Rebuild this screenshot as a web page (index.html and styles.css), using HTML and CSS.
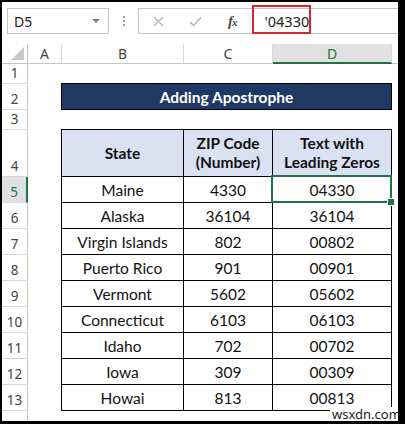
FILE: index.html
```html
<!DOCTYPE html>
<html>
<head>
<meta charset="utf-8">
<link rel="stylesheet" href="styles.css">
</head>
<body>
<div class="frame">
  <div class="fbar">
    <div class="namebox"><span class="nb-text">D5</span><span class="nb-arrow"></span></div>
    <div class="dots"><i></i><i></i><i></i></div>
    <div class="fbox">
      <svg class="ico-x" width="11" height="11" viewBox="0 0 11 11"><path d="M1 1 L10 10 M10 1 L1 10" stroke="#b4b4b4" stroke-width="1.3" fill="none"/></svg>
      <svg class="ico-ok" width="13" height="11" viewBox="0 0 13 11"><path d="M1 6 L4.5 9.5 L12 1.5" stroke="#b4b4b4" stroke-width="1.4" fill="none"/></svg>
      <span class="fx">f<span class="fx-x">x</span></span>
      <span class="ftext">'04330</span>
    </div>
    <div class="redbox"></div>
  </div>
  <div class="colheads">
    <div class="corner"><span class="tri"></span></div>
    <div class="ch cw-a">A</div>
    <div class="ch cw-b">B</div>
    <div class="ch cw-c">C</div>
    <div class="ch cw-d sel">D</div>
    <div class="ch rest"></div>
  </div>
  <div class="body">
    <div class="rowheads">
      <div class="rh h20">1</div>
      <div class="rh h26">2</div>
      <div class="rh h20">3</div>
      <div class="rh h47">4</div>
      <div class="rh h26 sel">5</div>
      <div class="rh h26">6</div>
      <div class="rh h26">7</div>
      <div class="rh h26">8</div>
      <div class="rh h26">9</div>
      <div class="rh h26">10</div>
      <div class="rh h26">11</div>
      <div class="rh h26">12</div>
      <div class="rh h26">13</div>
      <div class="rh h26">14</div>
    </div>
    <div class="content">
      <div class="title">Adding Apostrophe</div>
      <div class="tbl">
        <div class="th">State</div>
        <div class="th">ZIP Code<br>(Number)</div>
        <div class="th">Text with<br>Leading Zeros</div>

        <div class="td">Maine</div><div class="td">4330</div><div class="td active">04330</div>
        <div class="td">Alaska</div><div class="td">36104</div><div class="td">36104</div>
        <div class="td">Virgin Islands</div><div class="td">802</div><div class="td">00802</div>
        <div class="td">Puerto Rico</div><div class="td">901</div><div class="td">00901</div>
        <div class="td">Vermont</div><div class="td">5602</div><div class="td">05602</div>
        <div class="td">Connecticut</div><div class="td">6103</div><div class="td">06103</div>
        <div class="td">Idaho</div><div class="td">702</div><div class="td">00702</div>
        <div class="td">Iowa</div><div class="td">309</div><div class="td">00309</div>
        <div class="td">Howai</div><div class="td">813</div><div class="td">00813</div>
      </div>
    </div>
  </div>
  <div class="watermark">wsxdn.com</div>
</div>
</body>
</html>
```
FILE: styles.css
```css
html, body {
  margin: 0;
  padding: 0;
  background: #fff;
}
.frame {
  position: relative;
  width: 405px;
  height: 424px;
  box-sizing: border-box;
  border-style: solid;
  border-color: #000;
  border-width: 2px 7px 3px 2px;
  background: #fff;
  overflow: hidden;
  font-family: "Noto Sans", "Open Sans", sans-serif;
}
.fbar {
  position: relative;
  height: 42px;
  display: flex;
  align-items: flex-start;
  padding-top: 6px;
  box-sizing: border-box;
}
.namebox {
  margin-left: 5px;
  width: 102px;
  height: 26px;
  box-sizing: border-box;
  border: 1px solid #c6c6c6;
  display: flex;
  align-items: center;
  justify-content: space-between;
  padding: 0 8px 0 6px;
  font-size: 14px;
  color: #222;
}
.nb-arrow {
  width: 0;
  height: 0;
  border-left: 4px solid transparent;
  border-right: 4px solid transparent;
  border-top: 4px solid #808080;
}
.dots {
  width: 29px;
  height: 26px;
  display: flex;
  flex-direction: column;
  align-items: center;
  justify-content: center;
  gap: 2px;
}
.dots i {
  display: block;
  width: 2px;
  height: 2px;
  background: #a0a0a0;
}
.fbox {
  flex: 1;
  height: 26px;
  box-sizing: border-box;
  border: 1px solid #c6c6c6;
  border-right: none;
  display: flex;
  align-items: center;
  margin-right: -20px;
}
.ico-x { margin-left: 14px; }
.ico-ok { margin-left: 25px; }
.fx {
  margin-left: 26px;
  font-family: "Liberation Serif", serif;
  font-style: italic;
  font-weight: bold;
  font-size: 15px;
  color: #4a4a4a;
  letter-spacing: -1px;
}
.fx-x { font-size: 11px; }
.ftext {
  margin-left: 28px;
  font-size: 14.5px;
  color: #222;
}
.redbox {
  position: absolute;
  left: 250px;
  top: 3px;
  width: 59px;
  height: 29px;
  box-sizing: border-box;
  border: 2px solid #d0282e;
}
.colheads {
  display: flex;
  height: 20px;
  font-size: 14px;
  color: #444;
}
.colheads > div {
  box-sizing: border-box;
  height: 20px;
  border-bottom: 1px solid #c6c6c6;
  border-right: 1px solid #d8d8d8;
  display: flex;
  align-items: center;
  justify-content: center;
}
.corner {
  width: 26px;
  position: relative;
  border-right-color: #c6c6c6 !important;
}
.tri {
  position: absolute;
  right: 3px;
  bottom: 3px;
  width: 0;
  height: 0;
  border-left: 13px solid transparent;
  border-bottom: 13px solid #c8c8c8;
}
.cw-a { width: 34px; }
.cw-b { width: 122px; }
.cw-c { width: 89px; }
.cw-d { width: 119px; }
.colheads .sel {
  background: #e1e1e1;
  border-bottom: 2px solid #217346;
  color: #217346;
}
.colheads .rest { flex: 1; border-right: none !important; }
.body {
  display: flex;
}
.rowheads {
  width: 26px;
  flex: none;
  font-size: 13.5px;
  color: #444;
}
.rh {
  box-sizing: border-box;
  border-right: 1px solid #c6c6c6;
  border-bottom: 1px solid #d8d8d8;
  display: flex;
  align-items: flex-end;
  justify-content: center;
  padding-bottom: 1px;
}
.h20 { height: 20px; }
.h26 { height: 26px; }
.h47 { height: 47px; }
.rh.sel {
  background: #e1e1e1;
  border-right: 2px solid #217346;
  color: #217346;
}
.content {
  padding-left: 33px;
  padding-top: 19px;
  font-family: Lato, "Open Sans", sans-serif;
}
.title {
  width: 331px;
  height: 27px;
  box-sizing: border-box;
  border: 1px solid #000;
  background: #203864;
  color: #fff;
  font-weight: bold;
  font-size: 15.5px;
  display: flex;
  align-items: center;
  justify-content: center;
  margin-bottom: 19px;
}
.tbl {
  display: grid;
  grid-template-columns: 122px 89px 119px;
  grid-template-rows: 47px;
  grid-auto-rows: 26px;
  border-left: 1px solid #000;
  border-top: 1px solid #000;
  width: 331px;
  box-sizing: border-box;
  font-size: 15.5px;
  color: #111;
}
.th, .td {
  box-sizing: border-box;
  border-right: 1px solid #000;
  border-bottom: 1px solid #000;
  display: flex;
  align-items: center;
  justify-content: center;
  text-align: center;
}
.th {
  background: #d9e1f2;
  font-weight: bold;
  line-height: 19px;
}
.td.active { position: relative; }
.td.active::after {
  content: "";
  position: absolute;
  left: -2px;
  top: -2px;
  right: -1px;
  bottom: -1px;
  border: 2px solid #217346;
}
.td.active::before {
  content: "";
  position: absolute;
  right: -4px;
  bottom: -4px;
  width: 6px;
  height: 6px;
  background: #217346;
  border: 1px solid #fff;
  z-index: 2;
}
.watermark {
  position: absolute;
  left: 328px;
  top: 405px;
  font-family: "Noto Sans", sans-serif;
  font-size: 13px;
  color: #222;
  background: #fff;
  padding: 0 2px;
  line-height: 14px;
}
```
